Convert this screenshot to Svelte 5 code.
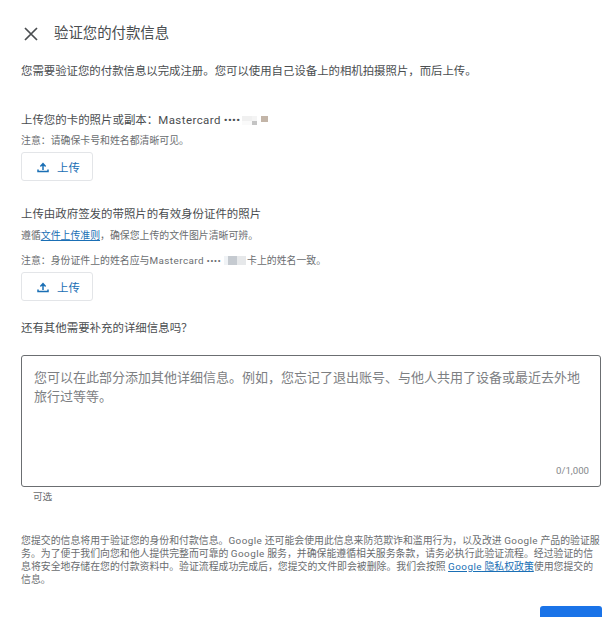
<script>
    let details = "";
    const maxLength = 1000;
    const placeholder = "您可以在此部分添加其他详细信息。例如，您忘记了退出账号、与他人共用了设备或最近去外地旅行过等等。";
</script>

<div class="page">
    <header class="head">
        <button class="close" aria-label="关闭">
            <svg width="14" height="14" viewBox="0 0 14 14"><path d="M1 1L13 13M13 1L1 13" stroke="#4a4d50" stroke-width="1.7" fill="none" /></svg>
        </button>
        <h1>验证您的付款信息</h1>
    </header>

    <p class="intro">您需要验证您的付款信息以完成注册。您可以使用自己设备上的相机拍摄照片，而后上传。</p>

    <section class="card-upload">
        <h2>上传您的卡的照片或副本：<span class="latin">Mastercard</span> <span class="dots">••••</span><span class="mask one"></span><span class="mask two"></span></h2>
        <p class="note">注意：请确保卡号和姓名都清晰可见。</p>
        <button class="upload">
            <svg width="12" height="12" viewBox="0 0 12 12"><path d="M6 9V3.2M3.4 5.4L6 2.6l2.6 2.8M1 8.6v2h10v-2" stroke="#1a6fb5" stroke-width="1.5" fill="none" /></svg>
            <span>上传</span>
        </button>
    </section>

    <section class="id-upload">
        <h2>上传由政府签发的带照片的有效身份证件的照片</h2>
        <p class="note guide">遵循<a href="#guide">文件上传准则</a>，确保您上传的文件图片清晰可辨。</p>
        <p class="note second">注意：身份证件上的姓名应与<span class="latin">Mastercard</span> <span class="dots">••••</span><span class="mask three"></span>卡上的姓名一致。</p>
        <button class="upload">
            <svg width="12" height="12" viewBox="0 0 12 12"><path d="M6 9V3.2M3.4 5.4L6 2.6l2.6 2.8M1 8.6v2h10v-2" stroke="#1a6fb5" stroke-width="1.5" fill="none" /></svg>
            <span>上传</span>
        </button>
    </section>

    <h2 class="more">还有其他需要补充的详细信息吗？</h2>

    <div class="field">
        <textarea bind:value={details} {placeholder} maxlength={maxLength}></textarea>
        <span class="count">{details.length}/1,000</span>
    </div>
    <p class="optional">可选</p>

    <p class="legal">您提交的信息将用于验证您的身份和付款信息。<span class="latin">Google</span> 还可能会使用此信息来防范欺诈和滥用行为，以及改进 <span class="latin">Google</span> 产品的验证服务。为了便于我们向您和他人提供完整而可靠的 <span class="latin">Google</span> 服务，并确保能遵循相关服务条款，请务必执行此验证流程。经过验证的信息将安全地存储在您的付款资料中。验证流程成功完成后，您提交的文件即会被删除。我们会按照 <a href="#privacy"><span class="latin">Google</span> 隐私权政策</a>使用您提交的信息。</p>

    <div class="actions">
        <button class="submit">提交</button>
    </div>
</div>

<style>
    :global(body) {
        background: #fff;
    }

    .page {
        box-sizing: border-box;
        width: 615px;
        height: 623px;
        padding: 24px 13px 0 21px;
        overflow: hidden;
        font-family: Roboto, "Noto Sans CJK SC", sans-serif;
        color: #4a4d50;
    }

    .head {
        display: flex;
        align-items: center;
        height: 19px;
    }

    .close {
        display: flex;
        width: 33px;
        padding: 0 0 0 3px;
        border: 0;
        background: none;
    }

    h1 {
        margin: 0;
        font-size: 14.4px;
        font-weight: 400;
        line-height: 19px;
    }

    h2 {
        margin: 0;
        font-size: 11.45px;
        font-weight: 400;
        line-height: 16px;
    }

    p {
        margin: 0;
    }

    .intro {
        margin-top: 20px;
        font-size: 11.4px;
        line-height: 16px;
    }

    .card-upload {
        margin-top: 33px;
    }

    .id-upload {
        margin-top: 25px;
    }

    .latin {
        letter-spacing: 0.45px;
    }

    .note {
        margin-top: 6px;
        font-size: 9.9px;
        line-height: 13px;
        color: #6a6d70;
    }

    .guide {
        margin-top: 7px;
    }

    .second {
        margin-top: 12px;
    }

    .dots {
        letter-spacing: 0.3px;
    }

    .mask {
        display: inline-block;
        height: 9px;
        vertical-align: -1px;
    }

    .one {
        width: 15px;
        margin-left: 2px;
        background:
            linear-gradient(#f4f4f4 50%, #c4c4c4 50%) right / 5px 100% no-repeat,
            linear-gradient(#f0f0f0 50%, #fafafa 50%);
    }

    .two {
        width: 7px;
        height: 6px;
        margin-left: 4px;
        vertical-align: 2px;
        background: #c3b5a8;
    }

    .three {
        width: 22px;
        margin: 0 1px 0 3px;
        background: linear-gradient(90deg, #f0f3f6 20%, #c5cad0 20% 60%, #e6e8ea 60%);
    }

    .upload {
        display: flex;
        align-items: center;
        gap: 8px;
        width: 72px;
        height: 29px;
        margin-top: 5px;
        padding: 0 0 0 15px;
        border: 1px solid #e3e5e8;
        border-radius: 3px;
        background: #fff;
        font: inherit;
        font-size: 11.4px;
        color: #1a6fb5;
    }

    .more {
        margin-top: 19px;
    }

    .field {
        position: relative;
        margin-top: 19px;
        width: 580px;
        height: 132px;
    }

    textarea {
        display: block;
        box-sizing: border-box;
        width: 100%;
        height: 100%;
        padding: 12px 12px;
        border: 1px solid #6b6e71;
        border-radius: 3px;
        outline: 0;
        resize: none;
        font: inherit;
        font-size: 13px;
        line-height: 19px;
    }

    textarea::placeholder {
        color: #7d8083;
        opacity: 1;
    }

    .count {
        position: absolute;
        right: 12px;
        bottom: 11px;
        font-size: 9.65px;
        color: #85888b;
    }

    .optional {
        margin: 3px 0 0 12px;
        font-size: 9.65px;
        line-height: 13px;
        color: #6a6d70;
    }

    .legal {
        margin-top: 31px;
        width: 581px;
        font-size: 9.9px;
        line-height: 13px;
        color: #6a6d70;
    }

    a {
        color: #1a6fb5;
        text-decoration: underline;
    }

    .actions {
        display: flex;
        justify-content: flex-end;
        width: 581px;
        height: 11px;
        margin-top: 20px;
        overflow: hidden;
    }

    .submit {
        width: 62px;
        height: 32px;
        border: 0;
        border-radius: 3px 3px 0 0;
        background: #1a73e8;
        color: #fff;
        font: inherit;
        font-size: 11.3px;
    }
</style>
